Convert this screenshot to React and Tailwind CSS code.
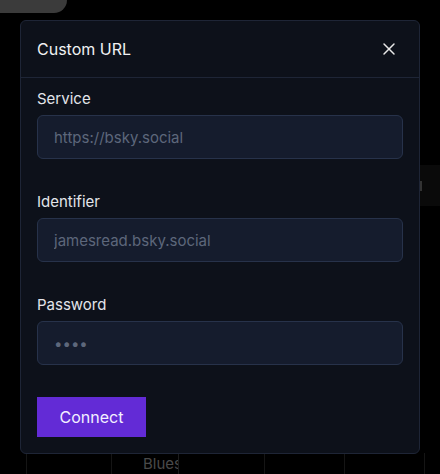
import { X } from "lucide-react";

function Field({ label, placeholder, type = "text" }) {
  return (
    <div className="flex flex-col">
      <label className="text-[15px] leading-6 text-[#e3e5ea] mb-1">{label}</label>
      <input
        type={type}
        placeholder={placeholder}
        className="h-[44px] w-full rounded-md border border-[#27324a] bg-[#151c2d] px-4 text-[15px] text-[#e3e5ea] placeholder:text-[#5d677b] outline-none"
      />
    </div>
  );
}

export default function App() {
  return (
    <div className="relative h-[474px] w-[440px] overflow-hidden bg-black font-['Inter',sans-serif]">
      {/* page behind the dialog */}
      <div className="h-[13px] w-[67px] rounded-br-[14px] bg-[#3b3b3b]" />
      <div className="ml-auto mt-[152px] flex h-[41px] w-[20px] items-center bg-[#0a0a0a]">
        <div className="h-[10px] w-[2px] bg-[#333]" />
      </div>
      <div className="mt-[247px] flex h-[30px] text-[#4a4a4a] text-[15px]">
        <div className="w-[27px] border-r border-[#151515]" />
        <div className="w-[85px] border-r border-[#151515]" />
        <div className="w-[67px] border-r border-[#1c1c1c] pl-[31px] pt-[1px] leading-5 overflow-hidden whitespace-nowrap">
          Bluesky
          <br />
          #social
        </div>
        <div className="w-[86px] border-r border-[#151515]" />
        <div className="w-[80px] border-r border-[#151515]" />
        <div className="w-[80px] border-r border-[#151515]" />
      </div>

      {/* dialog */}
      <div className="absolute left-[20px] top-[20px] w-[400px] rounded-md border border-[#1e2536] bg-[#0d111a]">
        <div className="flex h-[57px] items-center justify-between border-b border-[#1e2536] pl-4 pr-[20px]">
          <h2 className="text-[16px] text-[#f0f1f3]">Custom URL</h2>
          <button className="text-[#e8e8e8]">
            <X size={20} strokeWidth={1.75} />
          </button>
        </div>
        <div className="flex flex-col gap-[31px] px-4 pt-[9px] pb-4">
          <Field label="Service" placeholder="https://bsky.social" />
          <Field label="Identifier" placeholder="jamesread.bsky.social" />
          <Field label="Password" placeholder="••••" type="password" />
          <div className="pt-px">
            <button className="h-[40px] w-[109px] bg-[#632bd6] text-[16px] text-[#f3f0ff]">
              Connect
            </button>
          </div>
        </div>
      </div>
    </div>
  );
}
